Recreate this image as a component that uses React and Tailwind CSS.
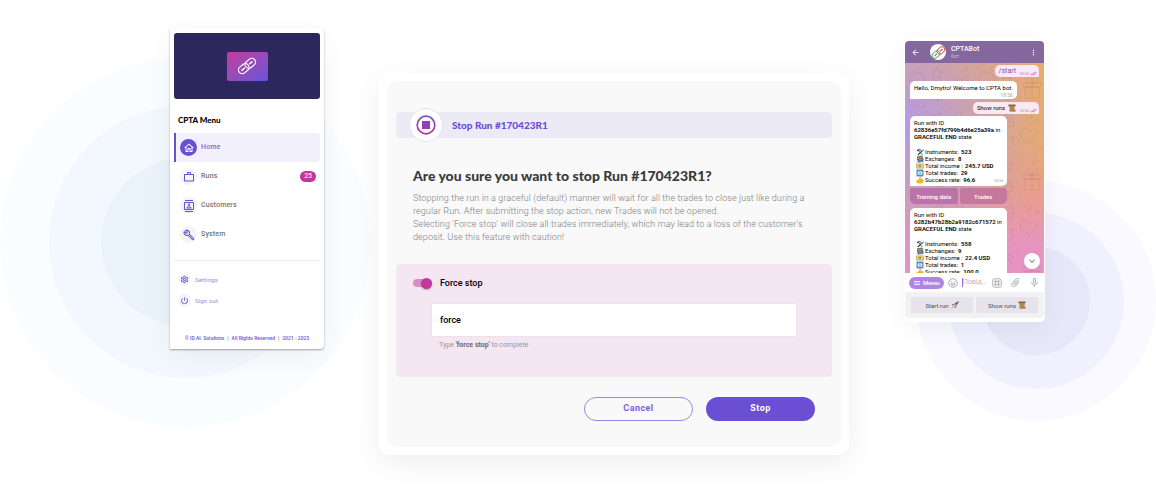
import React, { useState } from "react";
import {
  MdOutlineHome,
  MdWorkOutline,
  MdOutlineContacts,
  MdOutlineBuild,
  MdOutlineSettings,
  MdPowerSettingsNew,
  MdArrowBack,
  MdMoreVert,
  MdMicNone,
  MdAttachFile,
  MdDoneAll,
  MdKeyboardArrowDown,
  MdMenu,
} from "react-icons/md";

const NAV = [
  { label: "Home", icon: MdOutlineHome, active: true },
  { label: "Runs", icon: MdWorkOutline, badge: "25" },
  { label: "Customers", icon: MdOutlineContacts },
  { label: "System", icon: MdOutlineBuild },
];

const LINKS = [
  { label: "Settings", icon: MdOutlineSettings },
  { label: "Sign out", icon: MdPowerSettingsNew },
];

const RUNS = [
  { id: "62836e57fd799b4d6e25a39a", instruments: "523", exchanges: "8", income: "245.7 USD", trades: "29", rate: "96.6" },
  { id: "6282b47b28b2a9182c671572", instruments: "558", exchanges: "9", income: "22.4 USD", trades: "1", rate: "100.0" },
];

function Chain({ className, a, b }) {
  return (
    <svg viewBox="0 0 40 40" className={className} fill="none" strokeWidth="2.4" aria-hidden="true">
      <g transform="rotate(-40 20 20)">
        <rect x="0" y="12.500" width="23" height="15" rx="7.500" stroke={a} />
        <path d="M7 20h6" stroke={a} strokeWidth="3" strokeLinecap="round" />
        <rect x="17" y="12.500" width="23" height="15" rx="7.500" stroke={b} />
        <path d="M27 20h6" stroke={b} strokeWidth="3" strokeLinecap="round" />
      </g>
    </svg>
  );
}

function Tools() {
  return (
    <svg viewBox="0 0 16 16" className="size-2 shrink-0" fill="none" aria-hidden="true">
      <path d="M3 3l10 11" stroke="#5d6a74" strokeWidth="2" />
      <path d="M13 5L3.500 14" stroke="#39424a" strokeWidth="2.200" />
      <path d="M1.500 5.500L6.500 1.500l1.500 2-4.500 3.500z" fill="#39424a" />
      <path d="M14.500 2.500a3 3 0 1 1-4-1" stroke="#7b8790" strokeWidth="1.800" />
    </svg>
  );
}

function Books() {
  return (
    <svg viewBox="0 0 16 16" className="size-2 shrink-0" aria-hidden="true">
      <path d="M2 3l9-2 3 2v3L4 7 2 6z" fill="#3f8f4d" />
      <path d="M2 7l11-1 2 2v2L4 11 2 10z" fill="#b23a48" />
      <path d="M3 11l10-1 2 1v3L5 15l-2-1z" fill="#3b5b92" />
      <path d="M5 5.500l8-1M5 9.500l8-1M6 13.500l8-1" stroke="#eee" strokeWidth=".8" />
    </svg>
  );
}

function Money() {
  return (
    <svg viewBox="0 0 16 16" className="size-2 shrink-0" aria-hidden="true">
      <rect x="0" y="3" width="16" height="10" fill="#b9b17a" />
      <rect x="1.500" y="4.500" width="13" height="7" fill="#ddd39a" />
      <circle cx="8" cy="8" r="2.800" fill="#a8925a" />
      <rect x="10.500" y="3" width="2.500" height="10" fill="#f1d24e" />
      <rect x="3" y="3" width="2" height="10" fill="#e9c94c" />
    </svg>
  );
}

function Abacus() {
  return (
    <svg viewBox="0 0 16 16" className="size-2 shrink-0" aria-hidden="true">
      <rect x="1" y="1" width="14" height="14" rx="2" fill="#4f8fc4" />
      <rect x="3.500" y="5" width="9" height="6" rx="1" fill="#fff" />
      <path d="M5 8h6M8 6v4" stroke="#4f8fc4" strokeWidth="1.200" />
    </svg>
  );
}

function Thumb() {
  return (
    <svg viewBox="0 0 16 16" className="size-2 shrink-0" aria-hidden="true">
      <path d="M1 8l4-1 3-6c2 0 2.500 1.500 1.500 5H14c1.500 1 1 2.500.5 3 .5 1 .2 2-.5 2.500.2 1-.5 2-1 2-.3 1-1 1.500-2 1.500H6l-5-1z" fill="#fbb62d" />
      <path d="M9 9h5M9 11.500h4.500" stroke="#d98b16" strokeWidth=".8" />
    </svg>
  );
}

function Scroll() {
  return (
    <svg viewBox="0 0 16 16" className="size-2 shrink-0" aria-hidden="true">
      <path d="M2.500 3h11v12h-10z" fill="#b98f5e" />
      <rect x="0.500" y="1" width="15" height="3.500" rx="1.500" fill="#8d6236" />
      <path d="M3 11.500h11a1.500 1.500 0 0 1 0 3.500H4z" fill="#a98052" />
      <path d="M5 6.500h6M5 9h5" stroke="#9a7044" strokeWidth=".8" />
    </svg>
  );
}

function Rocket() {
  return (
    <svg viewBox="0 0 16 16" className="size-2 shrink-0" aria-hidden="true">
      <path d="M15 1c-4 0-7 2-9 6l3 3c4-2 6-5 6-9z" fill="#8fa3b3" />
      <path d="M15 1c-2 0-3.300.4-4.500 1L14 5.500C14.700 4 15 2.500 15 1z" fill="#d5323f" />
      <path d="M7 5L3 6.500 1.500 9.500 5.500 8zM11 9l-1.500 4-3 1.500L8 10.500z" fill="#d5323f" />
      <circle cx="10.500" cy="5.500" r="1.500" fill="#25435c" />
      <path d="M5.500 9.500L1 15l5.500-4.500z" fill="#f6a821" stroke="#f6a821" />
    </svg>
  );
}

function Doodles() {
  return (
    <svg className="absolute inset-0 size-full" aria-hidden="true">
      <defs>
        <pattern id="doodles" width="70" height="92" patternUnits="userSpaceOnUse">
          <g fill="none" stroke="#8a4a70" strokeOpacity=".16" strokeWidth=".9" strokeLinejoin="round">
            <path d="M6 12c2-5 4-5 6-2 3-2 6 0 5 3 4 1 3 6 0 7H9c-5 0-6-5-3-8z" />
            <path d="M32 4l2 4 4 1-3 3 1 4-4-2-4 2 1-4-3-3 4-1z" />
            <path d="M50 24h14v11H50zM48 20h18v4H48zM57 20v15M57 20c-6 0-7-6-3-6 2 0 3 3 3 6 0-3 2-6 4-6 4 0 2 6-4 6" />
            <path d="M4 36c6-5 11-1 14 0 4 2 3 8-1 8-4 1-4-3-7-2-3 2-8 0-6-6zM9 38v2M15 39v2" />
            <circle cx="33" cy="32" r="5" />
            <path d="M29 30c3 2 6 2 8 0M33 37v6" />
            <path d="M26 54l10-4 3 12-10 3zM29 56l6-2M30 60l6-2" />
            <circle cx="54" cy="52" r="3" />
            <circle cx="62" cy="58" r="1.600" />
            <path d="M5 60c0-8 14-8 14 0 0 5-14 5-14 0zM5 60v6c0 5 14 5 14 0v-6" />
            <path d="M46 68c4-6 8-2 9 0 4-3 9 0 6 4l-7 8-8-6c-1-2-1-4 0-6z" />
            <path d="M26 76c2-4 8-4 10 0l2-3v9c-3 5-11 5-13 0v-9z" />
            <circle cx="9" cy="82" r="3.500" />
            <path d="M42 8l4-4M45 44l2 3M20 26l3 2M64 84l3 3M22 88h3M58 6c3-3 6 0 4 2s-5 2-4-2" />
          </g>
        </pattern>
      </defs>
      <rect width="100%" height="100%" fill="url(#doodles)" />
    </svg>
  );
}

function Sidebar() {
  return (
    <aside className="mt-7 w-[154px] shrink-0 rounded-r-[4px] bg-white px-1 pt-[5px] pb-[7px] shadow-[0_1px_2px_rgba(0,0,0,0.35),0_8px_28px_rgba(0,0,0,0.05)]">
      <div className="flex h-[66px] items-center justify-center rounded-[3px] bg-[#2c285d]">
        <div className="flex h-[29px] w-[41px] items-center justify-center rounded-[2px] bg-linear-to-br from-[#c2379b] to-[#6750d8]">
          <Chain className="size-5" a="#fff" b="#fff" />
        </div>
      </div>
      <h2 className="mt-4 px-1 font-['Lato',sans-serif] text-[8px] leading-[10px] font-black text-black">CPTA Menu</h2>
      <nav className="mt-2">
        <ul>
          {NAV.map(({ label, icon: Icon, badge, active }) => (
            <li key={label}>
              <a
                href={"#" + label.toLowerCase()}
                className={
                  active
                    ? "flex h-[29px] items-center gap-1 rounded-r-[4px] border-l-2 border-[#6a4fd4] bg-[#f2f0fc] pr-1 pl-1 text-[#7d66d9]"
                    : "flex h-[29px] items-center gap-1 border-l-2 border-transparent pr-1 pl-1 text-[#737373]"
                }
              >
                <span
                  className={
                    active
                      ? "flex size-[17px] items-center justify-center rounded-full bg-[#6a4fd4] text-white"
                      : "flex size-[17px] items-center justify-center rounded-full bg-[#f4f4f5] text-[#6a4fd4]"
                  }
                >
                  <Icon className="size-3" />
                </span>
                <span className="text-[7px] leading-[9px] font-medium tracking-wide">{label}</span>
                {badge && (
                  <span className="ml-auto rounded-full bg-[#c2379b] px-1 text-[7px] leading-[11px] text-white">{badge}</span>
                )}
              </a>
            </li>
          ))}
        </ul>
      </nav>
      <hr className="mt-[11px] border-[#ececec]" />
      <ul className="mt-2 px-1">
        {LINKS.map(({ label, icon: Icon }) => (
          <li key={label}>
            <a href={"#" + label.toLowerCase().replace(" ", "-")} className="flex h-[21px] items-center gap-1 text-[#9a86e4]">
              <span className="flex size-[13px] items-center justify-center rounded-full bg-[#f4f4f5] text-[#6a4fd4]">
                <Icon className="size-[9px]" />
              </span>
              <span className="text-[6px] leading-[8px] tracking-wide">{label}</span>
            </a>
          </li>
        ))}
      </ul>
      <footer className="mt-[23px] flex justify-center gap-[3px] text-[5px] leading-[8px] font-medium whitespace-nowrap text-[#6a4fd4]">
        <span>© ID AI. Solutions</span>
        <span>|</span>
        <span>All Rights Reserved</span>
        <span>|</span>
        <span>2021 - 2023</span>
      </footer>
    </aside>
  );
}

function StopDialog() {
  const [force, setForce] = useState(true);
  return (
    <section className="mt-[73px] min-w-0 flex-1 rounded-[10px] bg-white p-2 shadow-[0_8px_30px_rgba(0,0,0,0.07)]">
      <div className="rounded-[10px] bg-[#f9f9f9] px-[9px] pt-[31px] pb-[26px]">
        <header className="flex h-[26px] items-center gap-[9px] rounded-[4px] bg-[#ecebf5] pl-[13px]">
          <span className="flex size-[34px] shrink-0 items-center justify-center rounded-full border border-[#e5e1f6] bg-white">
            <svg viewBox="0 0 20 20" className="size-5" aria-hidden="true">
              <defs>
                <linearGradient id="stop-ring" x1="0" y1="0" x2="0" y2="1">
                  <stop offset="0" stopColor="#6a4fd4" />
                  <stop offset="1" stopColor="#c2379b" />
                </linearGradient>
              </defs>
              <circle cx="10" cy="10" r="8.800" fill="none" stroke="url(#stop-ring)" strokeWidth="1.700" />
              <rect x="6" y="6" width="8" height="8" fill="#9640b8" />
            </svg>
          </span>
          <h1 className="font-['Lato',sans-serif] text-[10px] leading-[14px] font-black text-[#6a4fd4]">Stop Run #170423R1</h1>
        </header>
        <div className="px-[17px] pt-7">
          <h2 className="font-['Lato',sans-serif] text-[14px] leading-[20px] font-black text-[#3b3b3b]">
            Are you sure you want to stop Run #170423R1?
          </h2>
          <p className="mt-[6px] text-[9px] leading-[13px] font-light tracking-[0.01em] text-[#7d7d7d]">
            Stopping the run in a graceful (default) manner will wait for all the trades to close just like during a regular Run. After submitting the stop
            action, new Trades will not be opened.
            <br />
            Selecting 'Force stop' will close all trades immediately, which may lead to a loss of the customer's deposit. Use this feature with caution!
          </p>
        </div>
        <div className="mt-5 rounded-[4px] bg-[#f4e7f1] px-[17px] pt-3 pb-[27px]">
          <label className="flex w-fit items-center gap-2 text-[9px] leading-[14px] font-medium text-black">
            <input type="checkbox" role="switch" checked={force} onChange={(e) => setForce(e.target.checked)} className="peer sr-only" />
            <span className="flex h-2 w-[19px] items-center justify-start rounded-full bg-[#d98fc6] peer-checked:justify-end">
              <span className="size-[11px] shrink-0 rounded-full bg-[#c2379b] shadow-[0_1px_2px_rgba(0,0,0,0.25)]" />
            </span>
            Force stop
          </label>
          <div className="mt-[13px] px-[18px]">
            <input
              type="text"
              aria-label="Confirmation"
              aria-describedby="confirm-help"
              defaultValue="force"
              className="block h-[34px] w-full rounded-[2px] border border-[#ebe3e9] bg-white px-2 text-[9px] font-medium text-black outline-none"
            />
            <p id="confirm-help" className="mt-[3px] px-2 text-[7px] leading-[10px] text-[#9b939a]">
              Type <b className="font-bold text-[#6f686e]">'force stop'</b> to complete
            </p>
          </div>
        </div>
        <div className="mt-5 flex justify-end gap-[13px] pr-[17px] text-[9px] font-bold tracking-wider">
          <button type="button" className="h-6 w-[109px] rounded-full border border-[#9a86e4] text-[#7a61d8]">
            Cancel
          </button>
          <button type="button" className="h-6 w-[109px] rounded-full bg-[#6a4fd4] text-white">
            Stop
          </button>
        </div>
      </div>
    </section>
  );
}

function Receipt() {
  return (
    <span className="flex items-center gap-px self-end text-[4px] leading-[7px] text-[#b98fb8]">
      18:56
      <MdDoneAll className="size-[7px] text-[#d0559a]" />
    </span>
  );
}

function RunMessage({ run, time }) {
  const rows = [
    { icon: Tools, label: "Instruments: ", value: run.instruments },
    { icon: Books, label: "Exchanges: ", value: run.exchanges },
    { icon: Money, label: "Total income : ", value: run.income },
    { icon: Abacus, label: "Total trades: ", value: run.trades },
    { icon: Thumb, label: "Success rate: ", value: run.rate },
  ];
  return (
    <article className="flex flex-col rounded-t-[5px] rounded-br-[5px] bg-white px-1 pt-[3px] pb-[3px] text-[6px] leading-[7px] text-black">
      <p>
        Run with ID
        <br />
        <b className="font-semibold">{run.id}</b> in
        <br />
        <b className="font-semibold">GRACEFUL END</b> state
      </p>
      <div className="mt-2 flex items-end">
        <ul className="pl-0.5">
          {rows.map(({ icon: Icon, label, value }) => (
            <li key={label} className="flex h-[7px] items-center gap-px whitespace-pre">
              <Icon />
              {label}
              <b className="font-semibold">{value}</b>
            </li>
          ))}
        </ul>
        {time && <time className="ml-auto text-[4px] leading-[4px] text-[#a9a9a9]">{time}</time>}
      </div>
    </article>
  );
}

function Phone() {
  return (
    <section className="mt-[37px] w-[141px] shrink-0 rounded-[5px] bg-white px-px pt-1 pb-1 shadow-[0_6px_24px_rgba(0,0,0,0.05)]">
      <div className="overflow-hidden rounded-[4px]">
        <header className="flex h-[22px] items-center bg-[#84679f] px-[6px] text-white">
          <button type="button" aria-label="Back">
            <MdArrowBack className="size-[9px]" />
          </button>
          <span className="ml-[10px] flex size-4 items-center justify-center rounded-full bg-white">
            <Chain className="size-[15px]" a="#3c9a4f" b="#d23a3f" />
          </span>
          <div className="ml-[5px]">
            <h2 className="text-[7px] leading-[8px] font-medium">CPTABot</h2>
            <p className="text-[5px] leading-[7px] text-[#cdbedb]">бот</p>
          </div>
          <button type="button" aria-label="More" className="ml-auto">
            <MdMoreVert className="size-[9px]" />
          </button>
        </header>
        <div className="relative h-[210px] overflow-hidden bg-[radial-gradient(ellipse_at_0%_30%,#b599e6_0%,#b599e600_72%),linear-gradient(180deg,#e7ab70_35%,#e8a088_60%,#e594c2_88%)]">
          <Doodles />
          <div className="relative flex flex-col pr-[5px] pl-[5px] pt-0.5">
            <div className="flex h-3 items-center gap-[3px] self-end rounded-t-[5px] rounded-bl-[5px] bg-[#f8e9f4] pr-0.5 pl-1 text-[7px] leading-[8px] text-[#8d4f9f]">
              /start <Receipt />
            </div>
            <div className="mt-1 flex h-[18px] w-fit flex-col rounded-t-[5px] rounded-br-[5px] bg-white px-1 pt-0.5 text-[6px] leading-[9px] text-black">
              Hello, Dmytro! Welcome to CPTA bot.
              <time className="self-end text-[5px] leading-[6px] text-[#a9a9a9]">18:56</time>
            </div>
            <div className="mt-[3px] flex h-3 items-center gap-[3px] self-end rounded-t-[5px] rounded-bl-[5px] bg-[#f8e9f4] pr-0.5 pl-1 text-[6px] leading-[8px] text-black">
              Show runs <Scroll /> <Receipt />
            </div>
            <div className="mt-[2px] w-[97px]">
              <RunMessage run={RUNS[0]} time="18:56" />
              <div className="mt-0.5 grid grid-cols-2 gap-0.5 text-[6px] font-medium text-white">
                <button type="button" className="h-4 rounded-[3px] rounded-bl-[5px] bg-[#b56aa6]/80">
                  Training data
                </button>
                <button type="button" className="h-4 rounded-[3px] rounded-br-[5px] bg-[#bf6f98]/80">
                  Trades
                </button>
              </div>
              <div className="mt-1">
                <RunMessage run={RUNS[1]} />
              </div>
            </div>
          </div>
          <button
            type="button"
            aria-label="Scroll to latest"
            className="absolute right-1 bottom-1 flex size-4 items-center justify-center rounded-full bg-white text-[#8c8c8c]"
          >
            <MdKeyboardArrowDown className="size-3" />
          </button>
        </div>
        <div className="flex h-[19px] items-center bg-white px-1 text-[#a3a3a3]">
          <button type="button" className="flex h-3 items-center gap-0.5 rounded-full bg-[#ad85e6] px-1 text-[6px] font-medium text-white">
            <MdMenu className="size-2" />
            Меню
          </button>
          <button type="button" aria-label="Emoji" className="ml-1">
            <svg viewBox="0 0 20 20" className="size-[10px]" fill="none" stroke="currentColor" strokeWidth="1.800" aria-hidden="true">
              <circle cx="10" cy="10" r="8.500" />
              <path d="M5.500 11.500c1.500 4 7.500 4 9 0zM7 6.500v2M13 6.500v2" />
            </svg>
          </button>
          <input
            type="text"
            aria-label="Message"
            placeholder="Повід…"
            className="ml-1 h-[9px] w-0 min-w-0 flex-1 border-l border-[#9a6cd8] text-[7px] leading-[9px] outline-none placeholder:text-[#b9b9b9]"
          />
          <button type="button" aria-label="Bot keyboard">
            <svg viewBox="0 0 20 20" className="size-[10px]" fill="none" stroke="currentColor" strokeWidth="1.800" aria-hidden="true">
              <rect x="1.500" y="1.500" width="17" height="17" rx="4" />
              <path d="M5.500 5.500h3v3h-3zM11.500 5.500h3v3h-3zM5.500 11.500h3v3h-3zM11.500 11.500h3v3h-3z" fill="currentColor" strokeWidth="1" />
            </svg>
          </button>
          <button type="button" aria-label="Attach" className="ml-2">
            <MdAttachFile className="size-[11px] rotate-45" />
          </button>
          <button type="button" aria-label="Record" className="ml-2">
            <MdMicNone className="size-[11px]" />
          </button>
        </div>
        <div className="grid grid-cols-2 gap-[3px] bg-[#f2f1f5] px-[6px] py-[5px] text-[6px] text-[#4a4a50]">
          <button type="button" className="flex h-4 items-center justify-center gap-0.5 rounded-[1px] bg-[#e6e4ea]">
            Start run <Rocket />
          </button>
          <button type="button" className="flex h-4 items-center justify-center gap-0.5 rounded-[1px] bg-[#e6e4ea]">
            Show runs <Scroll />
          </button>
        </div>
      </div>
    </section>
  );
}

export default function App() {
  return (
    <main className="relative isolate flex min-h-screen items-start gap-[55px] bg-white pr-[111px] pl-[170px] font-['Roboto',sans-serif]">
      <svg viewBox="0 0 370 370" className="absolute top-[57px] left-0 -z-10 w-[370px]" aria-hidden="true">
        <circle cx="185" cy="185" r="185" fill="#f9fdff" />
        <circle cx="185" cy="185" r="136" fill="#f3f8ff" />
        <circle cx="185" cy="185" r="84" fill="#eaf3fb" />
      </svg>
      <svg viewBox="0 0 240 240" className="absolute top-[181px] right-0 -z-10 w-[240px]" aria-hidden="true">
        <circle cx="120" cy="120" r="120" fill="#f9f9ff" />
        <circle cx="120" cy="120" r="88" fill="#f1f0ff" />
        <circle cx="120" cy="120" r="54" fill="#e8e7fa" />
      </svg>
      <Sidebar />
      <StopDialog />
      <Phone />
    </main>
  );
}
